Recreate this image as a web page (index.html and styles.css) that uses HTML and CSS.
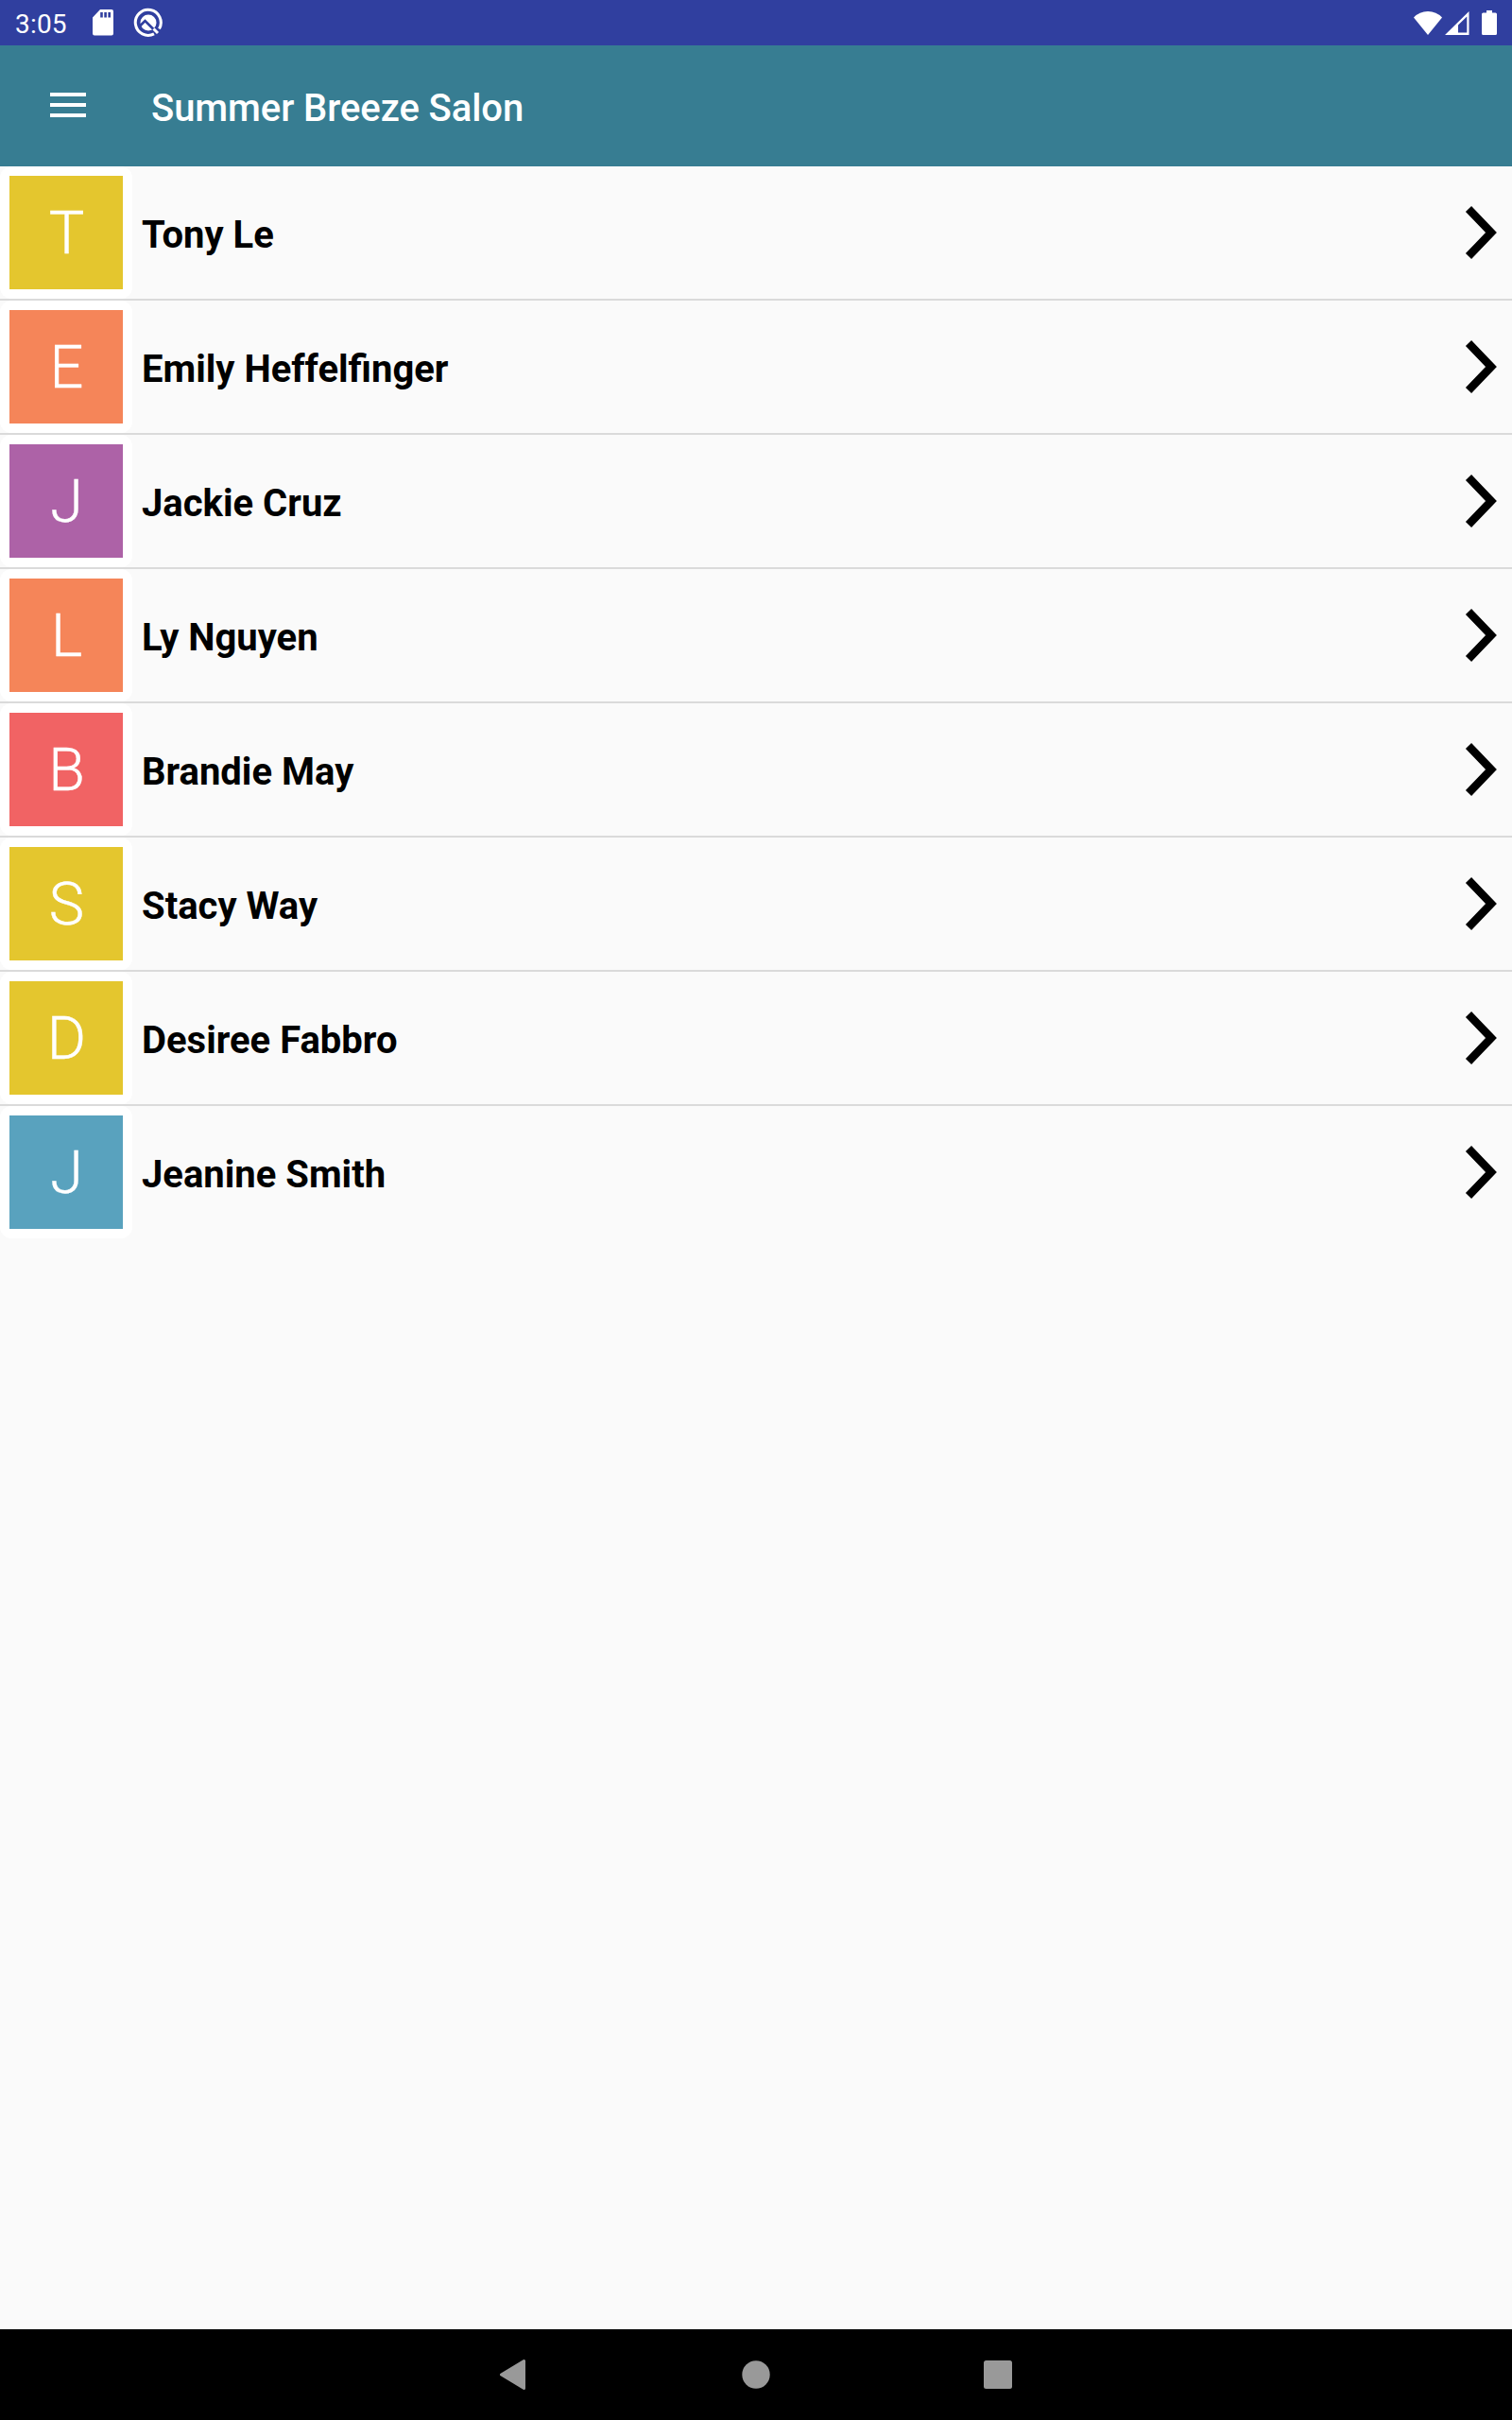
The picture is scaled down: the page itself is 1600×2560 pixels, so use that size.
FILE: index.html
```html
<!DOCTYPE html>
<html lang="en">
<head>
    <meta charset="UTF-8">
    <meta name="viewport" content="width=device-width, initial-scale=1.0">
    <title>Summer Breeze Salon</title>
    <link rel="stylesheet" href="styles.css">
</head>
<body>
    <div class="status-bar">
        <span class="clock">3:05</span>
        <svg class="sd-icon" width="22" height="28" viewBox="0 0 22 28">
            <path fill="#fff" fill-rule="evenodd" d="M8 0H20a2 2 0 0 1 2 2V25.500a2 2 0 0 1-2 2H2a2 2 0 0 1-2-2V8.500zM8.200 3v5.500h2.600V3zM12.300 3v5.500h2.600V3zM16.400 3v5.500H19V3z"/>
        </svg>
        <svg class="q-icon" width="32" height="32" viewBox="0 0 32 32">
            <path d="M22 27.800A13.500 13.500 0 1 1 27.500 22.500" fill="none" stroke="#fff" stroke-width="3"/>
            <circle cx="16" cy="16" r="8.500" fill="#fff"/>
            <path d="M6.500 20L12.500 14L24 25.500" fill="none" stroke="#303f9f" stroke-width="2.600"/>
            <path d="M21.500 22.500L26 27" stroke="#fff" stroke-width="3"/>
        </svg>
        <div class="status-right">
            <svg width="30" height="25" viewBox="0 0 30 25">
                <path fill="#fff" d="M0 6.500Q6 0 15 0T30 6.500L15 25z"/>
            </svg>
            <svg class="signal" width="26" height="25" viewBox="0 0 26 25">
                <path fill="#fff" fill-rule="evenodd" d="M25.500 0V25H0zM23.300 5.500L14 14.500V22.600H23.300z"/>
            </svg>
            <svg class="battery" width="16" height="26" viewBox="0 0 16 26">
                <path fill="#fff" d="M5 0h6v2.500h3.500a1.500 1.500 0 0 1 1.500 1.500v20.500a1.500 1.500 0 0 1-1.500 1.500h-13a1.500 1.500 0 0 1-1.500-1.500V4a1.500 1.500 0 0 1 1.500-1.500H5z"/>
            </svg>
        </div>
    </div>

    <header class="toolbar">
        <svg class="menu-icon" width="38" height="26" viewBox="0 0 38 26">
            <path fill="#fff" d="M0 0h38v4H0zM0 11h38v4H0zM0 22h38v4H0z"/>
        </svg>
        <h1 class="title">Summer Breeze Salon</h1>
    </header>

    <ul class="list">
        <li class="row">
            <div class="avatar"><span class="letter yellow">T</span></div>
            <span class="name">Tony Le</span>
            <svg class="chevron" viewBox="0 0 34 58"><path d="M4 4L28 29L4 54"/></svg>
        </li>
        <li class="row">
            <div class="avatar"><span class="letter orange">E</span></div>
            <span class="name">Emily Heffelfinger</span>
            <svg class="chevron" viewBox="0 0 34 58"><path d="M4 4L28 29L4 54"/></svg>
        </li>
        <li class="row">
            <div class="avatar"><span class="letter purple">J</span></div>
            <span class="name">Jackie Cruz</span>
            <svg class="chevron" viewBox="0 0 34 58"><path d="M4 4L28 29L4 54"/></svg>
        </li>
        <li class="row">
            <div class="avatar"><span class="letter orange">L</span></div>
            <span class="name">Ly Nguyen</span>
            <svg class="chevron" viewBox="0 0 34 58"><path d="M4 4L28 29L4 54"/></svg>
        </li>
        <li class="row">
            <div class="avatar"><span class="letter red">B</span></div>
            <span class="name">Brandie May</span>
            <svg class="chevron" viewBox="0 0 34 58"><path d="M4 4L28 29L4 54"/></svg>
        </li>
        <li class="row">
            <div class="avatar"><span class="letter yellow">S</span></div>
            <span class="name">Stacy Way</span>
            <svg class="chevron" viewBox="0 0 34 58"><path d="M4 4L28 29L4 54"/></svg>
        </li>
        <li class="row">
            <div class="avatar"><span class="letter yellow">D</span></div>
            <span class="name">Desiree Fabbro</span>
            <svg class="chevron" viewBox="0 0 34 58"><path d="M4 4L28 29L4 54"/></svg>
        </li>
        <li class="row">
            <div class="avatar"><span class="letter blue">J</span></div>
            <span class="name">Jeanine Smith</span>
            <svg class="chevron" viewBox="0 0 34 58"><path d="M4 4L28 29L4 54"/></svg>
        </li>
    </ul>

    <!-- system navigation -->
    <nav class="nav-bar">
        <svg width="30" height="34" viewBox="0 0 30 34">
            <path fill="#999" stroke="#999" stroke-width="3" stroke-linejoin="round" d="M25.500 2.500V31.500L1.500 17z"/>
        </svg>
        <svg width="30" height="30" viewBox="0 0 30 30"><circle cx="15" cy="15" r="14.700" fill="#999"/></svg>
        <svg width="30" height="30" viewBox="0 0 30 30"><rect width="30" height="30" rx="2.500" fill="#999"/></svg>
    </nav>
</body>
</html>
```

FILE: styles.css
```css
* {
    box-sizing: border-box;
}

body {
    margin: 0;
    height: 100vh;
    display: flex;
    flex-direction: column;
    overflow: hidden;
    background: #fafafa;
    font-family: Roboto, "Liberation Sans", sans-serif;
}

svg {
    display: block;
    flex-shrink: 0;
}

/* Status bar */
.status-bar {
    display: flex;
    align-items: center;
    height: 48px;
    padding: 0 16px;
    background: #303f9f;
    color: #fff;
}

.clock {
    width: 82px;
    font-size: 28px;
    line-height: 32px;
    letter-spacing: 0.2px;
    padding-top: 3px;
}

.q-icon {
    margin-left: 21px;
}

.status-right {
    display: flex;
    align-items: center;
    margin-left: auto;
}

.signal {
    margin-left: 3px;
}

.battery {
    margin-left: 13px;
}

/* Toolbar */
.toolbar {
    display: flex;
    align-items: center;
    height: 128px;
    padding: 0 53px;
    background: #377d92;
    color: #fff;
}

.menu-icon {
    margin-bottom: 2px;
}

.title {
    margin: 6px 0 0 69px;
    font-size: 40px;
    font-weight: 500;
    line-height: 48px;
    letter-spacing: -0.08px;
}

/* Client list */
.list {
    flex: 1;
    margin: 0;
    padding: 0;
    list-style: none;
}

.row {
    display: flex;
    align-items: center;
    height: 142px;
    padding-right: 16px;
    border-bottom: 2px solid #dadada;
}

.row:last-child {
    border-bottom-color: transparent;
}

.avatar {
    width: 140px;
    height: 140px;
    padding: 10px;
    background: #fff;
    border-radius: 12px;
}

.letter {
    display: block;
    height: 120px;
    padding-left: 1px;
    color: #fff;
    font-size: 63px;
    font-weight: 300;
    line-height: 122px;
    text-align: center;
    -webkit-text-stroke: 0.4px #fff;
}

.yellow {
    background: #e4c62e;
}

.orange {
    background: #f58559;
}

.purple {
    background: #ad62a7;
}

.red {
    background: #f16364;
}

.blue {
    background: #59a2be;
}

.name {
    flex: 1;
    padding: 5px 0 0 10px;
    color: #000;
    font-size: 40px;
    font-weight: 700;
    line-height: 48px;
}

.chevron {
    width: 34px;
    height: 58px;
    fill: none;
    stroke: #000;
    stroke-width: 8.5;
}

/* Navigation buttons */
.nav-bar {
    display: flex;
    align-items: center;
    justify-content: center;
    gap: 226px;
    height: 96px;
    background: #000;
}
```
